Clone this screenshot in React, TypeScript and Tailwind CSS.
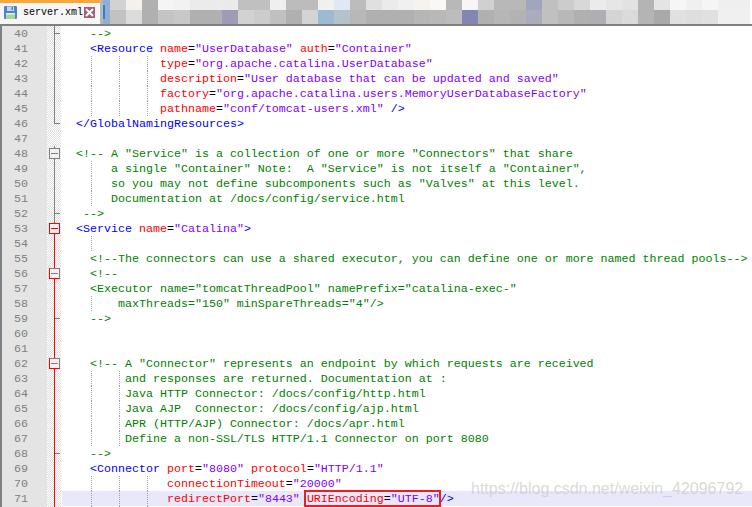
const topCells = [
  "bg-[#d2d2d2]", "bg-[#f4f0ec]", "bg-[#b0b0b0]", "bg-[#f5f5f5]", "bg-[#f2f2f2]", "bg-[#ebebeb]", "bg-[#ebebeb]", "bg-[#eaeaea]",
  "bg-[#c0c0c0]", "bg-[#c0c0c0]", "bg-[#efefef]", "bg-[#bcbcbc]", "bg-[#bcbcbc]", "bg-[#f0f0f0]", "bg-[#e0e8f2]", "bg-[#bcbcbc]",
  "bg-[#e0e0e0]", "bg-[#ebebeb]", "bg-[#f0f0f0]", "bg-[#f6f2ee]", "bg-[#f9f8f6]", "bg-[#b8b8b8]", "bg-[#f6f6f6]", "bg-[#d0d0d0]",
  "bg-[#b8b8b8]", "bg-[#b8b8b8]", "bg-[#a0a6bc]", "bg-[#c0c0c0]", "bg-[#cccccc]", "bg-[#d8d8d8]", "bg-[#ebebeb]", "bg-[#e6e6e6]",
  "bg-[#e2e2e2]", "bg-[#b4b4b4]", "bg-[#e4e4e4]", "bg-[#f6f6f6]", "bg-[#f0f0f0]", "bg-[#f5f5f5]", "bg-[#efefef]", "bg-[#efefef]",
]

const bottomCells = [
  "bg-[#c2c2c2]", "bg-[#dcdcdc]", "bg-[#b0b0b0]", "bg-[#c4c4c4]", "bg-[#c8c8c8]", "bg-[#b0b0b0]", "bg-[#b0b0b0]", "bg-[#9e9cb4]",
  "bg-[#d2d2d2]", "bg-[#cccccc]", "bg-[#c0c0c0]", "bg-[#b0b0b0]", "bg-[#d4d4d4]", "bg-[#9dbad2]", "bg-[#b4c2cb]", "bg-[#b8b8b8]",
  "bg-[#b0b0b0]", "bg-[#b0b0b0]", "bg-[#b0b0b0]", "bg-[#b6b6b6]", "bg-[#b8b8b8]", "bg-[#bcbcbc]", "bg-[#8386b2]", "bg-[#b0b0b0]",
  "bg-[#b6b6b6]", "bg-[#b2b2b2]", "bg-[#aaacbe]", "bg-[#c0c0c0]", "bg-[#b8b8b8]", "bg-[#b0b0b0]", "bg-[#b0aeb2]", "bg-[#d4d4d4]",
  "bg-[#dadada]", "bg-[#b4b4b4]", "bg-[#a9a9a9]", "bg-[#e0e0e0]", "bg-[#dedede]", "bg-[#e0e0e0]", "bg-[#f0f0f0]", "bg-[#f0f0f0]",
]

type Fold = "grayLine" | "grayTick" | "grayEnd" | "grayBox" | "redBox" | "red" | "redTick" | "mixBox" | "none"

type Line = { n?: number; text: string; comment?: boolean; fold?: Fold; guides?: number[] }

const lines: Line[] = [
  { n: 40, text: "    -->", comment: true, fold: "grayTick" },
  { n: 41, text: '    <Resource name="UserDatabase" auth="Container"', fold: "grayLine" },
  { n: 42, text: '              type="org.apache.catalina.UserDatabase"', fold: "grayLine", guides: [4, 8, 12] },
  { n: 43, text: '              description="User database that can be updated and saved"', fold: "grayLine", guides: [4, 8, 12] },
  { n: 44, text: '              factory="org.apache.catalina.users.MemoryUserDatabaseFactory"', fold: "grayLine", guides: [4, 8, 12] },
  { n: 45, text: '              pathname="conf/tomcat-users.xml" />', fold: "grayLine", guides: [4, 8, 12] },
  { n: 46, text: "  </GlobalNamingResources>", fold: "grayEnd" },
  { n: 47, text: "" },
  { n: 48, text: '  <!-- A "Service" is a collection of one or more "Connectors" that share', comment: true, fold: "grayBox" },
  { n: 49, text: '       a single "Container" Note:  A "Service" is not itself a "Container",', comment: true, fold: "grayLine", guides: [4] },
  { n: 50, text: "       so you may not define subcomponents such as \"Valves\" at this level.", comment: true, fold: "grayLine", guides: [4] },
  { n: 51, text: "       Documentation at /docs/config/service.html", comment: true, fold: "grayLine", guides: [4] },
  { n: 52, text: "   -->", comment: true, fold: "grayTick" },
  { n: 53, text: '  <Service name="Catalina">', fold: "redBox" },
  { n: 54, text: "", fold: "red", guides: [4] },
  { n: 55, text: "    <!--The connectors can use a shared executor, you can define one or more named thread pools-->", comment: true, fold: "red" },
  { n: 56, text: "    <!--", comment: true, fold: "mixBox" },
  { n: 57, text: '    <Executor name="tomcatThreadPool" namePrefix="catalina-exec-"', comment: true, fold: "red" },
  { n: 58, text: '        maxThreads="150" minSpareThreads="4"/>', comment: true, fold: "red", guides: [4] },
  { n: 59, text: "    -->", comment: true, fold: "redTick" },
  { n: 60, text: "", fold: "red" },
  { n: 61, text: "", fold: "red" },
  { n: 62, text: '    <!-- A "Connector" represents an endpoint by which requests are received', comment: true, fold: "mixBox" },
  { n: 63, text: "         and responses are returned. Documentation at :", comment: true, fold: "red", guides: [4, 8] },
  { n: 64, text: "         Java HTTP Connector: /docs/config/http.html", comment: true, fold: "red", guides: [4, 8] },
  { n: 65, text: "         Java AJP  Connector: /docs/config/ajp.html", comment: true, fold: "red", guides: [4, 8] },
  { n: 66, text: "         APR (HTTP/AJP) Connector: /docs/apr.html", comment: true, fold: "red", guides: [4, 8] },
  { n: 67, text: "         Define a non-SSL/TLS HTTP/1.1 Connector on port 8080", comment: true, fold: "red", guides: [4, 8] },
  { n: 68, text: "    -->", comment: true, fold: "redTick" },
  { n: 69, text: '    <Connector port="8080" protocol="HTTP/1.1"', fold: "red" },
  { n: 70, text: '               connectionTimeout="20000"', fold: "red", guides: [4, 8, 12] },
]

const guideLeft: Record<number, string> = { 4: "left-[29px]", 8: "left-[57px]", 12: "left-[85px]" }

// splits a line of xml into coloured pieces
function Xml({ text }: { text: string }) {
  const parts = text.split(/(<\/?[\w.]+|\/?>|[\w.]+(?==)|=|"[^"]*")/).filter(Boolean)
  return (
    <>
      {parts.map((p, i) => {
        let color = "text-black"
        if (p.startsWith("<") || p.endsWith(">")) color = "text-[#0000ff]"
        else if (p.startsWith('"')) color = "text-[#8000ff]"
        else if (p !== "=" && p.trim() !== "") color = "text-[#ff0000]"
        return (
          <span key={i} className={color}>
            {p}
          </span>
        )
      })}
    </>
  )
}

function Guides({ cols }: { cols?: number[] }) {
  return (
    <>
      {cols?.map((c) => (
        <span key={c} className={`absolute top-0 bottom-0 border-l border-dotted border-[#a0a0a0] ${guideLeft[c]}`} />
      ))}
    </>
  )
}

function FoldMark({ fold }: { fold?: Fold }) {
  if (!fold || fold === "none") return null
  const isRed = fold === "red" || fold === "redTick" || fold === "redBox" || fold === "mixBox"
  const hasBox = fold === "grayBox" || fold === "redBox" || fold === "mixBox"
  const hasTick = fold === "grayTick" || fold === "grayEnd" || fold === "redTick"
  return (
    <>
      {fold === "grayEnd" ? (
        <span className="absolute left-[7px] top-0 h-2 w-px bg-[#808080]" />
      ) : (
        <span className={`absolute left-[7px] top-0 bottom-0 w-px ${isRed ? "bg-[#ff0000]" : "bg-[#808080]"}`} />
      )}
      {fold === "redBox" && <span className="absolute left-[7px] top-0 h-[2px] w-px bg-[#808080]" />}
      {hasTick && <span className="absolute left-[8px] top-[7px] h-px w-[5px] bg-[#808080]" />}
      {hasBox && (
        <span
          className={`absolute left-[2px] top-[2px] flex h-[11px] w-[11px] items-center justify-center border bg-[#f0f0f0] ${
            fold === "redBox"
              ? "border-[#ff0000]"
              : fold === "mixBox"
                ? "border-[#808080] border-l-[#ff0000] border-b-[#ff0000]"
                : "border-[#808080]"
          }`}
        >
          <span className={`h-px w-[7px] ${fold === "redBox" ? "bg-[#ff0000]" : "bg-[#808080]"}`} />
        </span>
      )}
    </>
  )
}

function Row({ line, highlight, children }: { line: Line; highlight?: boolean; children?: React.ReactNode }) {
  return (
    <div className="flex h-[15px] leading-[15px]">
      <div className="w-[45px] shrink-0 bg-[#e4e4e4] pl-3 pt-px text-[#808080]">{line.n}</div>
      <div className="relative w-[14px] shrink-0 bg-[repeating-conic-gradient(#e0e0e0_0_25%,#ffffff_0_50%)] bg-[length:2px_2px]">
        <FoldMark fold={line.fold} />
      </div>
      <div className="w-px shrink-0 bg-white" />
      <div className={`relative min-w-0 flex-1 whitespace-pre pt-px ${highlight ? "bg-[#e8e8fa]" : ""}`}>
        <Guides cols={line.guides} />
        {children ?? (line.comment ? <span className="text-[#008000]">{line.text}</span> : <Xml text={line.text} />)}
      </div>
    </div>
  )
}

export default function App() {
  const last: Line = { n: 71, text: "", fold: "red", guides: [4, 8, 12] }
  const clipped: Line = { text: "", fold: "red", guides: [4, 8, 12] }

  return (
    <div className="relative h-[507px] w-[752px] overflow-hidden bg-white font-['Liberation_Mono',monospace] text-[11.67px]">
      <div className="flex h-6">
        <div className="flex h-6 w-[100px] shrink-0 flex-col bg-[#f6f6f6]">
          <div className="h-[3px] bg-[#f9a63a]" />
          <div className="flex flex-1 items-center pb-[2px] pl-1 pr-[5px]">
            <svg width="13" height="13" viewBox="0 0 13 13" className="shrink-0">
              <rect x="0" y="0" width="13" height="13" rx="1" fill="#4f84cc" />
              <rect x="3" y="0.5" width="7" height="4.5" fill="#c6d8f0" />
              <rect x="7.5" y="1" width="1.5" height="3" fill="#4f84cc" />
              <rect x="2" y="7" width="9" height="6" fill="#a9d59a" />
              <rect x="2" y="7" width="9" height="1.5" fill="#e4f0dc" />
            </svg>
            <span className="ml-[6px] text-[10px] leading-none text-black">server.xml</span>
            <span className="ml-auto flex h-[11px] w-[11px] shrink-0 items-center justify-center bg-[#a0607a]">
              <svg width="9" height="9" viewBox="0 0 9 9">
                <path d="M1 1 L8 8 M8 1 L1 8" stroke="#ffffff" strokeWidth="2" />
              </svg>
            </span>
          </div>
        </div>
        <div className="h-6 w-[3px] shrink-0 bg-[#b8b8b8]" />
        <div className="flex h-6 w-[7px] shrink-0 flex-col justify-center bg-[#8fb0d0]">
          <div className="h-[14px] w-[2px] bg-[#2f7fe0]" />
        </div>
        <div className="flex flex-col">
          <div className="flex h-[10px]">
            {topCells.map((c, i) => (
              <div key={i} className={`h-full w-4 shrink-0 ${c}`} />
            ))}
          </div>
          <div className="flex h-[14px]">
            {bottomCells.map((c, i) => (
              <div key={i} className={`h-full w-4 shrink-0 ${c}`} />
            ))}
          </div>
        </div>
      </div>
      <div className="h-[2px] bg-[#808080]" />
      <div className="border-l-2 border-[#808080]">
        {lines.map((line) => (
          <Row key={line.n} line={line} />
        ))}
        <Row line={last} highlight>
          <Xml text={'               redirectPort="8443" '} />
          <span className="relative">
            <Xml text={'URIEncoding="UTF-8"'} />
            <span className="absolute -left-[3px] -right-px -top-[2px] -bottom-px border-2 border-[#ee1c25]" />
          </span>
          <Xml text="/>" />
        </Row>
        <Row line={clipped} />
      </div>
      <div className="absolute left-[471px] top-[479px] font-['Liberation_Sans',sans-serif] text-[16px] leading-[20px] text-[#c8c8c8]/70">
        https://blog.csdn.net/weixin_42096792
      </div>
    </div>
  )
}
